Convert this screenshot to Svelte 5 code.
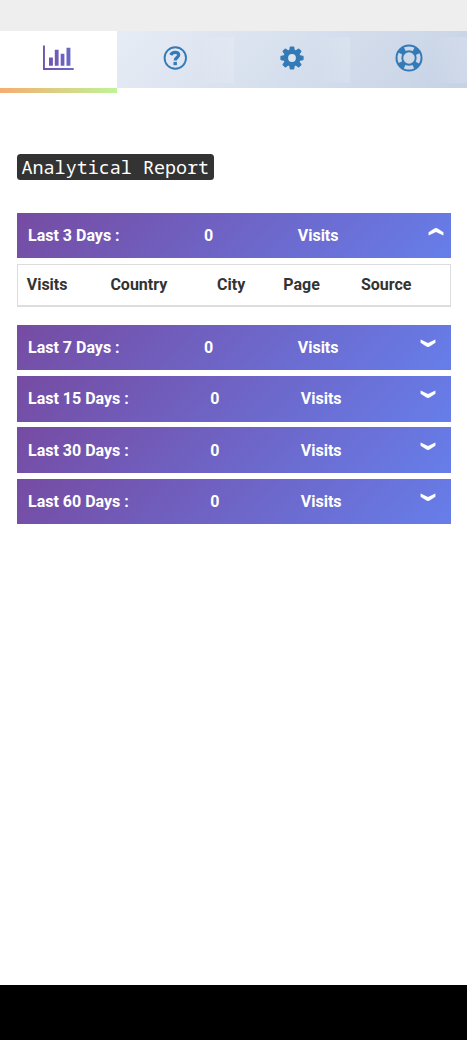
<script lang="ts">
  let openDays = $state(3);

  const reports = [
    { days: 3, visits: 0 },
    { days: 7, visits: 0 },
    { days: 15, visits: 0 },
    { days: 30, visits: 0 },
    { days: 60, visits: 0 }
  ];

  const columns = ["Visits", "Country", "City", "Page", "Source"];

  function toggle(days: number) {
    openDays = openDays === days ? 0 : days;
  }
</script>

<div class="screen">
  <div class="statusbar"></div>

  <nav class="tabs">
    <div class="tab active">
      <svg width="32" height="26" viewBox="0 0 32 26" fill="none">
        <defs>
          <linearGradient id="chart" x1="0" y1="0" x2="1" y2="0">
            <stop offset="0" stop-color="#7350ab" />
            <stop offset="1" stop-color="#686bc9" />
          </linearGradient>
        </defs>
        <path fill="url(#chart)" d="M1 .5h1.900v22.600H31.700v2H1zM7 12.500h3.900v8.200H7zM12.800 4.700h3.800v16h-3.800zM18.700 8.700h3.700v12h-3.700zM24.500 2.700h3.900v18h-3.900z" />
      </svg>
    </div>
    <div class="tab">
      <svg width="24" height="24" viewBox="0 0 24 24" fill="none">
        <circle cx="12.300" cy="12" r="10.700" stroke="#337ab7" stroke-width="1.900" />
        <path d="M7.800 9C8.600 7.200 10 6.400 12 6.400C14.300 6.400 15.700 7.500 15.700 9.100C15.700 11.500 12.300 11.300 12.200 14.500" stroke="#337ab7" stroke-width="3.200" />
        <path fill="#337ab7" d="M10.500 15.900h3.400v3.300h-3.400z" />
      </svg>
    </div>
    <div class="tab">
      <svg width="24" height="24" viewBox="0 0 24 24">
        <g fill="#337ab7">
          {#each [0, 45, 90, 135] as angle}
            <path d="M9.700 1.200Q9.800 .4 10.500 .4h3q.7 0 .8.8l.6 3.800v14l-.6 3.800q-.1.800-.8.800h-3q-.7 0-.8-.8L9.100 19V5z" transform="rotate({angle} 12 12)" />
          {/each}
          <circle cx="12" cy="12" r="8.500" />
        </g>
        <circle cx="12" cy="12" r="3.900" fill="#dce4f0" />
      </svg>
    </div>
    <div class="tab">
      <svg width="28" height="28" viewBox="0 0 28 28" fill="none" stroke="#337ab7">
        <circle cx="14" cy="14" r="12.500" stroke-width="2" />
        <circle cx="14" cy="14" r="6.700" stroke-width="1.900" />
        <circle cx="14" cy="14" r="9.500" stroke-width="5.500" stroke-dasharray="6.200 8.723" stroke-dashoffset="3.100" transform="rotate(45 14 14)" />
      </svg>
    </div>
  </nav>
  <div class="indicator"></div>

  <main>
    <code class="title">Analytical Report</code>

    <div class="reports">
      {#each reports as report}
        <button class="bar" onclick={() => toggle(report.days)}>
          <span>Last {report.days} Days :</span>
          <span>{report.visits}</span>
          <span>Visits</span>
          <svg class="arrow" class:open={openDays === report.days} width="16" height="9" viewBox="0 0 16 9">
            <path fill="#fff" d="M.6.4L8 3.900 15.400.4V3.800L10 7.300Q8 8.500 6 7.300L.6 3.800z" />
          </svg>
        </button>
        {#if openDays === report.days}
          <table>
            <thead>
              <tr>
                {#each columns as column}
                  <th class={column.toLowerCase()}>{column}</th>
                {/each}
              </tr>
            </thead>
          </table>
        {/if}
      {/each}
    </div>
  </main>

  <div class="navbar"></div>
</div>

<style>
  :global(body) {
    background: #fff;
  }
  .screen {
    display: flex;
    flex-direction: column;
    height: 1040px;
    font-family: Roboto, sans-serif;
    font-size: 16px;
    color: #333;
  }
  .statusbar {
    height: 30.5px;
    background: #eee;
  }
  .tabs {
    display: flex;
    height: 57.5px;
    background: linear-gradient(135deg, #f0f4fa 0%, #c6d2e5 100%);
  }
  .tab {
    flex: 1;
    display: flex;
    align-items: center;
    justify-content: center;
    padding-bottom: 2px;
    box-sizing: border-box;
    background: linear-gradient(90deg, transparent 70%, rgba(255, 255, 255, .15)) 0 6px / 100% 46px no-repeat;

    &.active {
      background: #fff;
    }
  }
  .indicator {
    width: 25%;
    height: 5px;
    background: linear-gradient(90deg, #f6ad70, #bef498);
  }
  main {
    flex: 1;
    padding: 61px 16px 0 17px;
  }
  .title {
    display: block;
    width: fit-content;
    height: 26px;
    line-height: 26px;
    padding: 0 4.500px;
    border-radius: 3.500px;
    background: #333;
    color: #fff;
    font-family: "Noto Sans Mono", "DejaVu Sans Mono", monospace;
    font-size: 18.400px;
  }
  .reports {
    display: flex;
    flex-direction: column;
    gap: 5.900px;
    margin-top: 32.500px;
  }
  .bar {
    display: flex;
    justify-content: space-between;
    align-items: center;
    height: 45.300px;
    padding: 0 12px 0 11px;
    border: 0;
    background: linear-gradient(135deg, #764ba2 0%, #667eea 100%);
    color: #fff;
    font: bold 16px Roboto, sans-serif;
  }
  .arrow {
    margin: 0 3px 8px -3px;

    &.open {
      margin: 0 -5px 8px 5px;
      transform: rotate(180deg);
    }
  }
  table {
    width: 100%;
    height: 43.500px;
    margin-bottom: 12px;
    border: 1px solid #ddd;
    border-bottom-width: 2px;
    border-spacing: 0;
    box-sizing: border-box;
    table-layout: fixed;
  }
  th {
    padding: 0 0 0 8.700px;
    text-align: left;

    &.visits {
      width: 75px;
    }
    &.country {
      width: 98px;
    }
    &.city {
      width: 57.500px;
    }
    &.page {
      width: 69px;
    }
  }
  .navbar {
    height: 55px;
    background: #000;
  }
</style>
